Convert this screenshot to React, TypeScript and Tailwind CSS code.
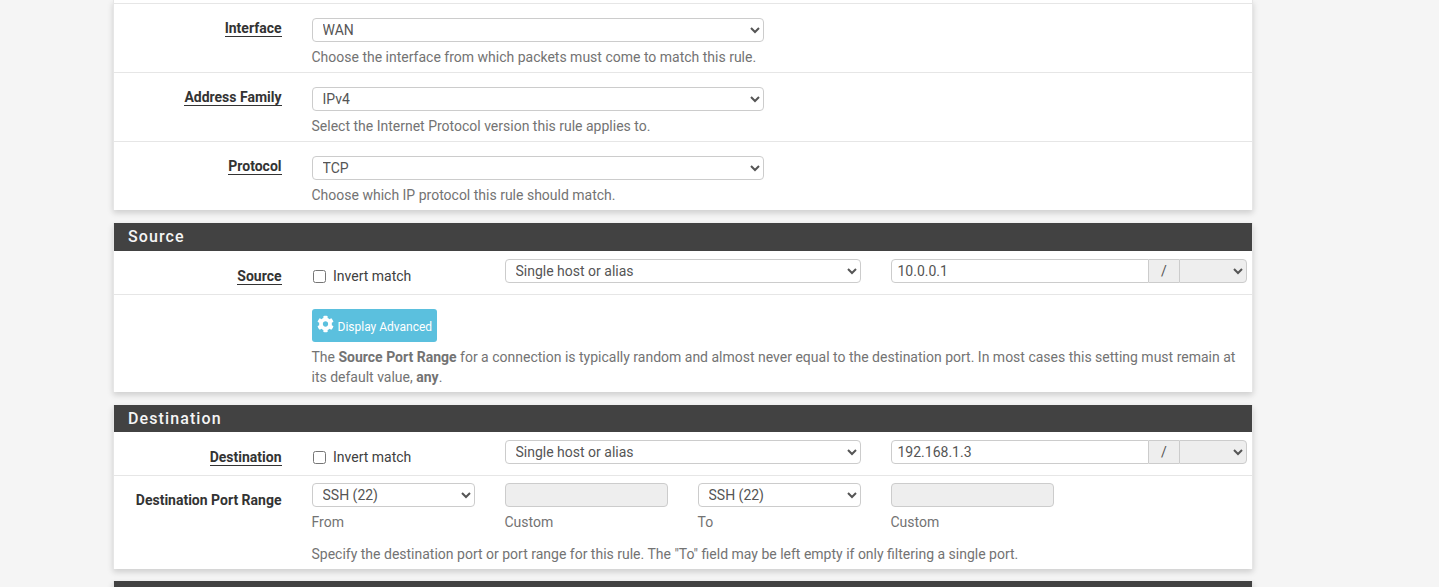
import React from "react";

const font = { fontFamily: "Roboto, sans-serif" };

function Sel({ value, w }: { value: string; w: string }) {
  return (
    <select
      defaultValue={value}
      className={`${w} h-[24px] shrink-0 rounded-[4px] border border-[#cccccc] bg-white pl-[5.5px] text-[14px] leading-[20px] text-[#555555]`}
    >
      <option>{value}</option>
    </select>
  );
}

function Label({ children, plain }: { children: React.ReactNode; plain?: boolean }) {
  return (
    <div className="w-[168px] shrink-0 pr-[0.5px] text-right text-[14px] leading-[20px] font-bold text-[#333333]">
      {plain ? <span>{children}</span> : <span className="border-b border-[#333333]">{children}</span>}
    </div>
  );
}

function Help({ children }: { children: React.ReactNode }) {
  return <div className="ml-[-0.5px] text-[14px] leading-[20px] text-[#737373]">{children}</div>;
}

function SelectRow({ label, value, help, last }: { label: string; value: string; help: string; last?: boolean }) {
  return (
    <div className={`flex pt-[14px] ${last ? "h-[68px]" : "h-[69px] border-b border-[#e6e6e6]"}`}>
      <Label>{label}</Label>
      <div className="ml-[30px] flex flex-col gap-[5px]">
        <Sel value={value} w="w-[452px]" />
        <Help>{help}</Help>
      </div>
    </div>
  );
}

function Header({ title, h }: { title: string; h: string }) {
  return (
    <div className={`flex ${h} items-center bg-[#424242] pl-[14px] text-[16px] font-medium tracking-[1.1px] text-[#f5f5f5]`}>
      {title}
    </div>
  );
}

function Invert() {
  return (
    <label className="flex w-[193px] shrink-0 items-center gap-[7px] pl-[1px] text-[14px] leading-[20px] text-[#404040]">
      <input type="checkbox" className="m-0 h-[13px] w-[13px] shrink-0" />
      Invert match
    </label>
  );
}

function HostRow({ label, address }: { label: string; address: string }) {
  return (
    <>
      <Sel value="Single host or alias" w="w-[356px]" />
      <div className="ml-[30px] flex h-[24px] w-[356px] shrink-0">
        <input
          readOnly
          value={address}
          className="h-full min-w-0 flex-1 rounded-l-[4px] border border-[#cccccc] bg-white px-[5.5px] text-[14px] text-[#555555]"
        />
        <div className="flex h-full w-[30px] shrink-0 items-center justify-center border-y border-[#cccccc] bg-[#eeeeee] text-[14px] text-[#555555]">
          /
        </div>
        <select
          aria-label={`${label} mask`}
          className="h-full w-[68px] shrink-0 rounded-r-[4px] border border-[#cccccc] bg-[#eeeeee] text-[14px] text-[#555555]"
        />
      </div>
    </>
  );
}

function Disabled({ w }: { w: string }) {
  return <div className={`${w} h-[24px] shrink-0 rounded-[4px] border border-[#cccccc] bg-[#eeeeee]`} />;
}

function Panel({ children, mt }: { children: React.ReactNode; mt?: string }) {
  return (
    <section className={`${mt ?? ""} border-x border-[#e6e6e6] bg-white shadow-[0_3px_6px_rgba(0,0,0,0.16)]`}>
      {children}
    </section>
  );
}

function PortColumn({ caption, children }: { caption: string; children: React.ReactNode }) {
  return (
    <div className="w-[163px]">
      {children}
      <div className="mt-[5px]">
        <Help>{caption}</Help>
      </div>
    </div>
  );
}

export default function App() {
  return (
    <div style={font} className="h-[587px] w-[1439px] overflow-hidden bg-[#f5f5f5]">
      <main className="ml-[113px] flex w-[1140px] flex-col">
        <Panel>
          <div className="h-[4px] border-b border-[#e6e6e6]" />
          <SelectRow label="Interface" value="WAN" help="Choose the interface from which packets must come to match this rule." />
          <SelectRow label="Address Family" value="IPv4" help="Select the Internet Protocol version this rule applies to." />
          <SelectRow label="Protocol" value="TCP" help="Choose which IP protocol this rule should match." last />
        </Panel>

        <Panel mt="mt-[13px]">
          <Header title="Source" h="h-[28px]" />
          <div className="flex h-[44px] border-b border-[#e6e6e6] pt-[8px]">
            <div className="mt-[7px]">
              <Label>Source</Label>
            </div>
            <div className="ml-[30px] flex items-start">
              <div className="mt-[7px]">
                <Invert />
              </div>
              <HostRow label="Source" address="10.0.0.1" />
            </div>
          </div>
          <div className="h-[97px] pl-[198px] pt-[14px]">
            <button className="flex h-[33px] w-[125px] items-center gap-[4px] rounded-[3px] bg-[#5bc0de] pl-[5px] text-[12px] text-white">
              <svg viewBox="0 0 512 512" className="mt-[-3px] h-[18px] w-[17px] fill-white">
                <path d="M487.4 315.7l-42.6-24.6c4.3-23.2 4.3-47 0-70.2l42.6-24.6c4.9-2.8 7.1-8.6 5.5-14-11.1-35.6-30-67.8-54.7-94.6-3.8-4.1-10-5.1-14.8-2.3L380.8 110c-17.9-15.4-38.5-27.3-60.8-35.1V25.8c0-5.6-3.9-10.5-9.4-11.7-36.7-8.2-74.3-7.8-109.2 0-5.5 1.2-9.4 6.1-9.4 11.7V75c-22.2 7.9-42.8 19.8-60.8 35.1L88.7 85.5c-4.9-2.8-11-1.9-14.8 2.3-24.7 26.7-43.6 58.9-54.7 94.6-1.7 5.4.6 11.2 5.5 14L67.3 221c-4.3 23.2-4.3 47 0 70.2l-42.6 24.6c-4.9 2.8-7.1 8.6-5.5 14 11.1 35.6 30 67.8 54.7 94.6 3.8 4.1 10 5.1 14.8 2.3l42.6-24.6c17.9 15.4 38.5 27.3 60.8 35.1v49.2c0 5.6 3.9 10.5 9.4 11.7 36.7 8.2 74.3 7.8 109.2 0 5.5-1.2 9.4-6.1 9.4-11.7v-49.2c22.2-7.9 42.8-19.8 60.8-35.1l42.6 24.6c4.9 2.8 11 1.9 14.8-2.3 24.7-26.7 43.6-58.9 54.7-94.6 1.5-5.5-.7-11.3-5.6-14.1zM256 336c-44.1 0-80-35.9-80-80s35.9-80 80-80 80 35.9 80 80-35.9 80-80 80z" />
              </svg>
              <span className="ml-[-0.5px] mt-[3px]">Display Advanced</span>
            </button>
            <div className="mt-[5px] w-[930px]">
              <Help>
                The <b className="font-bold">Source Port Range</b> for a connection is typically random and almost never equal to the destination port. In most cases this setting must remain at its default value, <b className="font-bold">any</b>.
              </Help>
            </div>
          </div>
        </Panel>

        <Panel mt="mt-[13px]">
          <Header title="Destination" h="h-[27px]" />
          <div className="flex h-[44px] border-b border-[#e6e6e6] pt-[8px]">
            <div className="mt-[7px]">
              <Label>Destination</Label>
            </div>
            <div className="ml-[30px] flex items-start">
              <div className="mt-[7px]">
                <Invert />
              </div>
              <HostRow label="Destination" address="192.168.1.3" />
            </div>
          </div>
          <div className="flex h-[93px] pt-[7px]">
            <div className="mt-[7px]">
              <Label plain>Destination Port Range</Label>
            </div>
            <div className="ml-[30px] flex flex-col">
              <div className="flex gap-[30px]">
                <PortColumn caption="From">
                  <Sel value="SSH (22)" w="w-[163px]" />
                </PortColumn>
                <PortColumn caption="Custom">
                  <Disabled w="w-[163px]" />
                </PortColumn>
                <PortColumn caption="To">
                  <Sel value="SSH (22)" w="w-[163px]" />
                </PortColumn>
                <PortColumn caption="Custom">
                  <Disabled w="w-[163px]" />
                </PortColumn>
              </div>
              <div className="mt-[12px]">
                <Help>Specify the destination port or port range for this rule. The "To" field may be left empty if only filtering a single port.</Help>
              </div>
            </div>
          </div>
        </Panel>

        <Panel mt="mt-[12px]">
          <div className="h-[28px] bg-[#424242]" />
        </Panel>
      </main>
    </div>
  );
}
